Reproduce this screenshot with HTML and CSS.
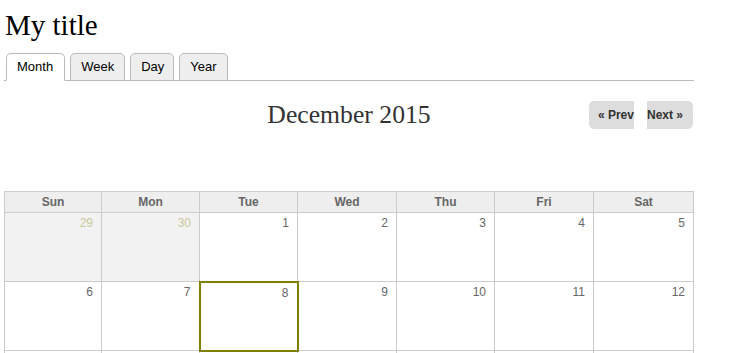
FILE: index.html
```html
<!DOCTYPE html>
<html>
<head>
<meta charset="utf-8">
<title>Calendar</title>
<link rel="stylesheet" href="styles.css">
</head>
<body>
<div class="page">
  <h1 class="title">My title</h1>
  <ul class="tabs">
    <li class="tab active">Month</li>
    <li class="tab">Week</li>
    <li class="tab narrow">Day</li>
    <li class="tab">Year</li>
  </ul>
  <div class="toolbar">
    <div class="side"></div>
    <h2 class="month">December 2015</h2>
    <div class="side nav">
      <span class="btn prev">« Prev</span>
      <span class="btn next">Next »</span>
    </div>
  </div>
  <table class="cal">
    <colgroup>
      <col class="c1"><col class="c2"><col class="c3"><col class="c4"><col class="c5"><col class="c6"><col class="c7">
    </colgroup>
    <thead>
      <tr><th>Sun</th><th>Mon</th><th>Tue</th><th>Wed</th><th>Thu</th><th>Fri</th><th>Sat</th></tr>
    </thead>
    <tbody>
      <tr><td class="other">29</td><td class="other">30</td><td>1</td><td>2</td><td>3</td><td>4</td><td>5</td></tr>
      <tr><td>6</td><td>7</td><td class="today">8</td><td>9</td><td>10</td><td>11</td><td>12</td></tr>
      <tr><td>13</td><td>14</td><td>15</td><td>16</td><td>17</td><td>18</td><td>19</td></tr>
      <tr><td>20</td><td>21</td><td>22</td><td>23</td><td>24</td><td>25</td><td>26</td></tr>
      <tr><td>27</td><td>28</td><td>29</td><td>30</td><td>31</td><td class="other">1</td><td class="other">2</td></tr>
      <tr><td class="other">3</td><td class="other">4</td><td class="other">5</td><td class="other">6</td><td class="other">7</td><td class="other">8</td><td class="other">9</td></tr>
    </tbody>
  </table>
</div>
</body>
</html>
```
FILE: styles.css
```css
html, body {
  margin: 0;
  padding: 0;
  background: #fff;
}
body {
  font-family: "Liberation Sans", Arial, sans-serif;
  color: #000;
}
.page {
  width: 690px;
  margin-left: 4px;
}
.title {
  margin: 9px 0 0 1px;
  font-family: "Liberation Serif", serif;
  font-weight: normal;
  font-size: 29px;
  line-height: 33px;
  color: #000;
}
.tabs {
  list-style: none;
  margin: 11px 0 0 0;
  padding: 0 0 0 2px;
  display: flex;
  gap: 5px;
  border-bottom: 1px solid #bbb;
}
.tab {
  margin-bottom: -1px;
  padding: 0 10px;
  height: 26px;
  line-height: 26px;
  font-size: 13px;
  border: 1px solid #bbb;
  border-radius: 5px 5px 0 0;
  background: #eee;
  color: #000;
}
.tab.narrow {
  padding: 0 9px 0 10px;
}
.tab.active {
  background: #fff;
  border-bottom-color: #fff;
  padding: 0 11px 0 10px;
}
.toolbar {
  display: grid;
  grid-template-columns: 1fr auto 1fr;
  align-items: start;
  margin-top: 20px;
}
.month {
  margin: 0;
  font-family: "Liberation Serif", serif;
  font-weight: normal;
  font-size: 25.7px;
  line-height: 28px;
  color: #333;
}
.nav {
  display: flex;
  justify-content: flex-end;
  gap: 13px;
}
.btn {
  height: 28px;
  line-height: 28px;
  font-size: 12px;
  font-weight: bold;
  color: #333;
  background: #dddddd;
}
.prev {
  padding: 0 0 0 9px;
  border-radius: 5px 0 0 5px;
}
.next {
  padding: 0 10px 0 0;
  border-radius: 0 5px 5px 0;
  margin-right: 1px;
}
.cal {
  margin-top: 62px;
  width: 690px;
  border-collapse: collapse;
  table-layout: fixed;
}
.c1 { width: 97px; }
.c2 { width: 98px; }
.c3 { width: 98px; }
.c4 { width: 99px; }
.c5 { width: 98px; }
.c6 { width: 99px; }
.c7 { width: 100px; }
.cal th {
  height: 20px;
  padding: 0;
  font-size: 12px;
  font-weight: bold;
  color: #666;
  background: #eee;
  border: 1px solid #ccc;
  text-align: center;
}
.cal td {
  height: 69px;
  padding: 3px 8px 0 0;
  box-sizing: border-box;
  vertical-align: top;
  text-align: right;
  font-size: 12px;
  line-height: 14px;
  color: #666;
  border: 1px solid #ccc;
}
.cal td.other {
  background: #f2f2f2;
  color: #c9c99a;
}
.cal td.today {
  border: 2px solid #808000;
}
```
